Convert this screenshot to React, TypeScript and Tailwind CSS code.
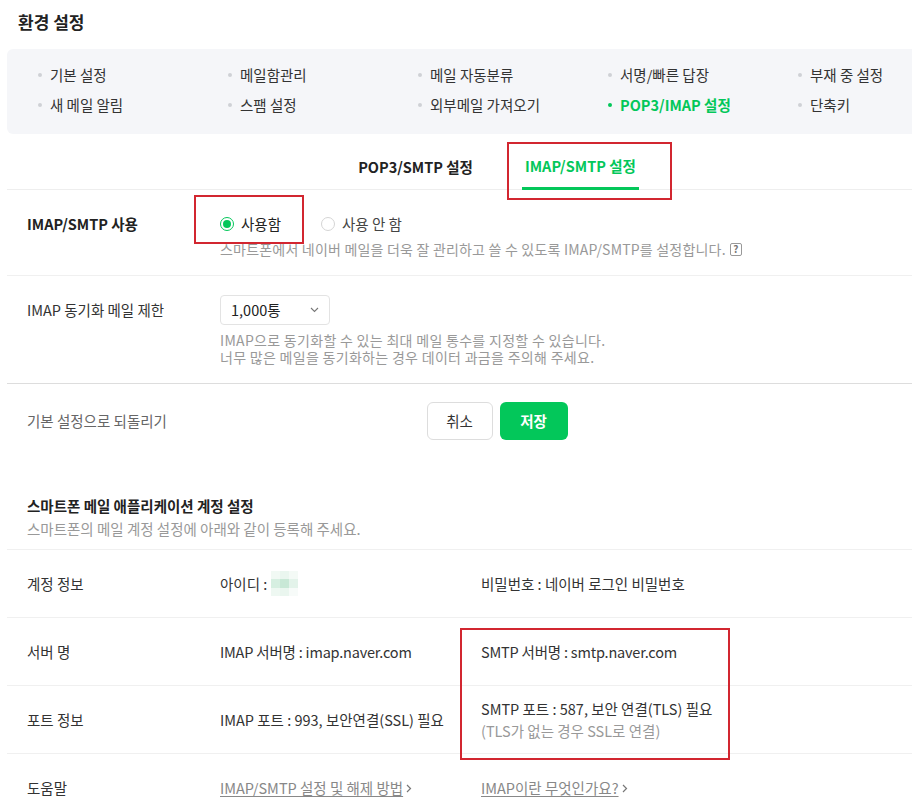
import React from "react";

const navRows: { label: string; active?: boolean }[][] = [
  [
    { label: "기본 설정" },
    { label: "메일함관리" },
    { label: "메일 자동분류" },
    { label: "서명/빠른 답장" },
    { label: "부재 중 설정" },
  ],
  [
    { label: "새 메일 알림" },
    { label: "스팸 설정" },
    { label: "외부메일 가져오기" },
    { label: "POP3/IMAP 설정", active: true },
    { label: "단축키" },
  ],
];

function Radio({ checked }: { checked?: boolean }) {
  return checked ? (
    <span className="flex h-[14px] w-[14px] items-center justify-center rounded-full border border-[#03c75a] bg-white">
      <span className="h-[8px] w-[8px] rounded-full bg-[#03c75a]" />
    </span>
  ) : (
    <span className="h-[14px] w-[14px] rounded-full border border-[#d5d5d5] bg-white" />
  );
}

function Chevron() {
  return (
    <svg width="9" height="6" viewBox="0 0 9 6" fill="none">
      <path d="M1 1l3.5 3.5L8 1" stroke="#777" strokeWidth="1.1" />
    </svg>
  );
}

function LinkArrow() {
  return (
    <svg width="6" height="9" viewBox="0 0 6 9" fill="none" className="ml-[3px]">
      <path d="M1 1l3.5 3.5L1 8" stroke="#777" strokeWidth="1.2" />
    </svg>
  );
}

export default function App() {
  return (
    <div className="h-[809px] w-[912px] overflow-hidden bg-white font-['Noto_Sans_CJK_KR','Noto_Sans',sans-serif] text-[14.5px] text-[#333]">
      <div className="ml-[7px] w-[980px]">
        {/* Title */}
        <div className="h-[49px] pl-[11px] pt-[12px] text-[17px] font-bold leading-[20px] text-[#222]">
          환경 설정
        </div>

        {/* Nav box */}
        <nav className="h-[85px] rounded-[6px] bg-[#f5f6f9] pl-[30px] pt-[11px]">
          {navRows.map((row, i) => (
            <div key={i} className="grid grid-cols-[repeat(5,190px)]">
              {row.map((item) => (
                <div key={item.label} className="flex h-[30px] items-center">
                  <span
                    className={
                      item.active
                        ? "ml-[1px] mr-[8px] h-[4px] w-[4px] rounded-full bg-[#03c75a]"
                        : "ml-[1px] mr-[8px] h-[4px] w-[4px] rounded-full bg-[#cfd1d6]"
                    }
                  />
                  <span
                    className={
                      item.active
                        ? "font-bold text-[#03c75a]"
                        : "text-[#333]"
                    }
                  >
                    {item.label}
                  </span>
                </div>
              ))}
            </div>
          ))}
        </nav>

        {/* Tabs */}
        <div className="flex h-[56px] justify-center gap-[46px] border-b border-[#eee]">
          <div className="-mb-px flex h-[56px] items-center px-[3px] pt-[10px] font-bold text-[#222]">
            POP3/SMTP 설정
          </div>
          <div className="relative -mb-px flex h-[56px] items-center border-b-[3px] border-[#03c75a] px-[3px] pt-[10px] font-bold text-[#03c75a]">
            IMAP/SMTP 설정
            <div className="absolute left-[-15px] top-[8px] h-[58px] w-[165px] border-2 border-[#d22630]" />
          </div>
        </div>

        {/* Row: IMAP/SMTP 사용 */}
        <div className="flex border-b border-[#f0f0f0] pb-[17px] pt-[24px]">
          <div className="w-[213px] pl-[20px] font-bold leading-[20px] text-[#222]">
            IMAP/SMTP 사용
          </div>
          <div className="relative flex-1">
            <div className="flex h-[20px] items-center">
              <label className="flex items-center gap-[7px]">
                <Radio checked />
                <span className="text-[#222]">사용함</span>
              </label>
              <label className="ml-[40px] flex items-center gap-[7px]">
                <Radio />
                <span className="text-[#444]">사용 안 함</span>
              </label>
            </div>
            <div className="mt-[6px] flex items-center text-[14px] leading-[18px] tracking-[0.2px] text-[#999]">
              스마트폰에서 네이버 메일을 더욱 잘 관리하고 쓸 수 있도록 IMAP/SMTP를 설정합니다.
              <span className="ml-[4px] flex h-[13px] w-[12px] items-center justify-center rounded-[2px] border border-[#999] text-[10px] font-bold leading-none tracking-normal text-[#777]">
                ?
              </span>
            </div>
            <div className="absolute left-[-26px] top-[-19px] h-[49px] w-[110px] border-2 border-[#d22630]" />
          </div>
        </div>

        {/* Row: IMAP 동기화 메일 제한 */}
        <div className="flex border-b border-[#ddd] pb-[17px] pt-[19px]">
          <div className="flex h-[30px] w-[213px] items-center pl-[20px] text-[#333]">
            IMAP 동기화 메일 제한
          </div>
          <div className="flex-1">
            <div className="flex h-[30px] w-[110px] items-center justify-between rounded-[4px] border border-[#e3e3e3] pl-[10px] pr-[10px] text-[#222]">
              <span>1,000통</span>
              <Chevron />
            </div>
            <div className="mt-[7px] text-[14px] leading-[17px] tracking-[0.3px] text-[#999]">
              <p>IMAP으로 동기화할 수 있는 최대 메일 통수를 지정할 수 있습니다.</p>
              <p>너무 많은 메일을 동기화하는 경우 데이터 과금을 주의해 주세요.</p>
            </div>
          </div>
        </div>

        {/* Row: buttons */}
        <div className="grid grid-cols-[1fr_auto_1fr] items-center pt-[18px]">
          <div className="pl-[20px] text-[#666]">기본 설정으로 되돌리기</div>
          <div className="flex gap-[7px]">
            <button className="h-[38px] w-[66px] rounded-[6px] border border-[#ddd] bg-white text-[#333]">
              취소
            </button>
            <button className="h-[38px] w-[68px] rounded-[6px] bg-[#03c75a] font-bold text-white">
              저장
            </button>
          </div>
          <div />
        </div>

        {/* Section header */}
        <div className="mt-[56px] pl-[20px]">
          <div className="font-bold leading-[20px] text-[#222]">
            스마트폰 메일 애플리케이션 계정 설정
          </div>
          <div className="mt-[4px] leading-[18px] text-[#999]">
            스마트폰의 메일 계정 설정에 아래와 같이 등록해 주세요.
          </div>
        </div>

        {/* Table */}
        <div className="relative mt-[11px] border-t border-[#f0f0f0]">
          <div className="grid h-[68px] grid-cols-[213px_261px_1fr] items-center border-b border-[#f0f0f0]">
            <div className="pl-[20px]">계정 정보</div>
            <div className="flex items-center">
              <span>아이디 :</span>
              <span className="ml-[4px] grid grid-cols-[9px_9px_9px] grid-rows-[8px_9px_8px]">
                <span className="bg-[#f1f9f4]" />
                <span className="bg-[#eaf6ef]" />
                <span className="bg-[#f4faf6]" />
                <span className="bg-[#d6efe1]" />
                <span className="bg-[#c8e8d6]" />
                <span className="bg-[#e3f3ea]" />
                <span className="bg-[#eef8f2]" />
                <span className="bg-[#eaf6ef]" />
                <span className="bg-[#f7fbf9]" />
              </span>
            </div>
            <div>비밀번호 : 네이버 로그인 비밀번호</div>
          </div>
          <div className="grid h-[68px] grid-cols-[213px_261px_1fr] items-center border-b border-[#f0f0f0]">
            <div className="pl-[20px]">서버 명</div>
            <div className="tracking-[-0.2px]">IMAP 서버명 : imap.naver.com</div>
            <div className="tracking-[-0.2px]">SMTP 서버명 : smtp.naver.com</div>
          </div>
          <div className="grid h-[68px] grid-cols-[213px_261px_1fr] items-center border-b border-[#f0f0f0]">
            <div className="pl-[20px]">포트 정보</div>
            <div>IMAP 포트 : 993, 보안연결(SSL) 필요</div>
            <div className="leading-[22px]">
              <div>SMTP 포트 : 587, 보안 연결(TLS) 필요</div>
              <div className="text-[#999]">(TLS가 없는 경우 SSL로 연결)</div>
            </div>
          </div>
          <div className="grid h-[68px] grid-cols-[213px_261px_1fr] items-center">
            <div className="pl-[20px]">도움말</div>
            <div className="flex items-center text-[#888]">
              <span className="underline underline-offset-2">IMAP/SMTP 설정 및 해제 방법</span>
              <LinkArrow />
            </div>
            <div className="flex items-center text-[#888]">
              <span className="underline underline-offset-2">IMAP이란 무엇인가요?</span>
              <LinkArrow />
            </div>
          </div>
          <div className="absolute left-[453px] top-[78px] h-[132px] w-[270px] border-2 border-[#d22630]" />
        </div>
      </div>
    </div>
  );
}
